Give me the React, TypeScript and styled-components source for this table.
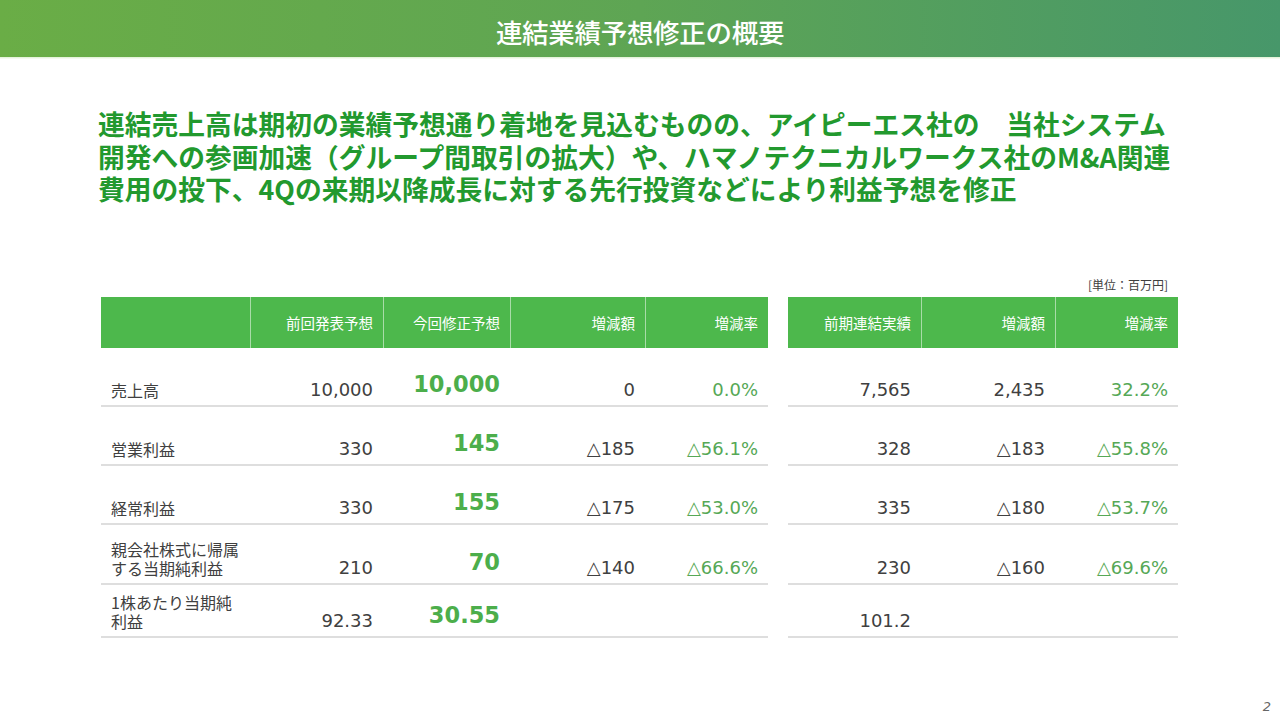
import React from "react";
import styled, { createGlobalStyle } from "styled-components";

const Global = createGlobalStyle`
  html, body { margin: 0; padding: 0; background: #ffffff; }
  body { width: 1280px; height: 720px; overflow: hidden; font-family: "Noto Sans CJK JP", "Noto Sans", sans-serif; }
`;

const Page = styled.div`
  width: 1280px;
  height: 720px;
  display: flex;
  flex-direction: column;
  position: relative;
  background: #fff;
`;

const TitleBar = styled.header`
  height: 57px;
  flex: 0 0 57px;
  display: flex;
  align-items: center;
  justify-content: center;
  background: linear-gradient(90deg, #6aad46 0%, #5ea554 50%, #47976a 100%);
  box-shadow: 0 1px 0 #e6f3dc, 0 2px 0 #f4faef;
`;

const Title = styled.h1`
  margin: 0;
  padding-top: 6px;
  font-family: "Noto Sans CJK JP", sans-serif;
  font-weight: 500;
  font-size: 26.5px;
  letter-spacing: -0.3px;
  color: #ffffff;
`;

const Headline = styled.p`
  margin: 0;
  padding: 51px 0 0 98px;
  font-family: "Noto Sans CJK JP", sans-serif;
  font-weight: 700;
  font-size: 26.75px;
  line-height: 32.5px;
  color: #22992e;
  white-space: pre;
`;

const TablesArea = styled.div`
  margin-top: 71px;
  padding-left: 101px;
  display: flex;
  gap: 20px;
  align-items: flex-end;
`;

const TableCol = styled.div`
  display: flex;
  flex-direction: column;
`;

const Unit = styled.div`
  align-self: flex-end;
  padding-right: 10px;
  height: 20px;
  font-family: "Noto Sans CJK JP", sans-serif;
  font-size: 12px;
  line-height: 16px;
  color: #404040;
`;

const Grid = styled.div<{ $cols: string }>`
  display: grid;
  grid-template-columns: ${(p) => p.$cols};
  grid-template-rows: 51px 59px 59px 59px 60px 53px;
`;

const HeadCell = styled.div<{ $first?: boolean }>`
  background: #4db84c;
  display: flex;
  align-items: center;
  justify-content: flex-end;
  padding-right: 10px;
  color: #ffffff;
  font-family: "Noto Sans CJK JP", sans-serif;
  font-size: 14.5px;
  border-left: ${(p) => (p.$first ? "none" : "1px solid #a9dca8")};
`;

const Cell = styled.div<{ $pad?: number }>`
  display: flex;
  align-items: flex-end;
  justify-content: flex-end;
  padding: 0 10px ${(p) => p.$pad ?? 5}px 10px;
  border-bottom: 2px solid #dedede;
`;

const Label = styled(Cell)`
  justify-content: flex-start;
  font-family: "Noto Sans CJK JP", sans-serif;
  font-size: 16px;
  line-height: 19px;
  color: #404040;
`;

const Num = styled.span<{ $tone?: "plain" | "big" | "rate" }>`
  font-family: "DejaVu Sans", Verdana, sans-serif;
  font-size: ${(p) => (p.$tone === "big" ? "22.5px" : "18px")};
  font-weight: ${(p) => (p.$tone === "big" ? 700 : 400)};
  line-height: ${(p) => (p.$tone === "big" ? "26px" : "21px")};
  color: ${(p) =>
    p.$tone === "big" ? "#4cae4b" : p.$tone === "rate" ? "#56a856" : "#404040"};
`;

const PageNo = styled.div`
  position: absolute;
  right: 9px;
  bottom: 6px;
  font-family: "DejaVu Sans", sans-serif;
  font-size: 13px;
  font-style: italic;
  color: #666;
`;

type Row = {
  label: string;
  prev: string;
  now: string;
  diff: string;
  rate: string;
  last: string;
  diff2: string;
  rate2: string;
};

const rows: Row[] = [
  { label: "売上高", prev: "10,000", now: "10,000", diff: "0", rate: "0.0%", last: "7,565", diff2: "2,435", rate2: "32.2%" },
  { label: "営業利益", prev: "330", now: "145", diff: "△185", rate: "△56.1%", last: "328", diff2: "△183", rate2: "△55.8%" },
  { label: "経常利益", prev: "330", now: "155", diff: "△175", rate: "△53.0%", last: "335", diff2: "△180", rate2: "△53.7%" },
  { label: "親会社株式に帰属\nする当期純利益", prev: "210", now: "70", diff: "△140", rate: "△66.6%", last: "230", diff2: "△160", rate2: "△69.6%" },
  { label: "1株あたり当期純\n利益", prev: "92.33", now: "30.55", diff: "", rate: "", last: "101.2", diff2: "", rate2: "" },
];

const LabelText = styled.span`
  white-space: pre;
`;

export default function App() {
  return (
    <Page>
      <Global />
      <TitleBar>
        <Title>連結業績予想修正の概要</Title>
      </TitleBar>
      <Headline>
        {"連結売上高は期初の業績予想通り着地を見込むものの、アイピーエス社の　当社システム\n開発への参画加速（グループ間取引の拡大）や、ハマノテクニカルワークス社のM&A関連\n費用の投下、4Qの来期以降成長に対する先行投資などにより利益予想を修正"}
      </Headline>
      <TablesArea>
        <TableCol>
          <Grid $cols="149px 133px 127px 135px 123px">
            <HeadCell $first />
            <HeadCell>前回発表予想</HeadCell>
            <HeadCell>今回修正予想</HeadCell>
            <HeadCell>増減額</HeadCell>
            <HeadCell>増減率</HeadCell>
            {rows.map((r) => (
              <React.Fragment key={r.label}>
                <Label>
                  <LabelText>{r.label}</LabelText>
                </Label>
                <Cell>
                  <Num>{r.prev}</Num>
                </Cell>
                <Cell $pad={8}>
                  <Num $tone="big">{r.now}</Num>
                </Cell>
                <Cell>
                  <Num>{r.diff}</Num>
                </Cell>
                <Cell>
                  <Num $tone="rate">{r.rate}</Num>
                </Cell>
              </React.Fragment>
            ))}
          </Grid>
        </TableCol>
        <TableCol>
          <Unit>[単位：百万円]</Unit>
          <Grid $cols="133px 134px 123px">
            <HeadCell $first>前期連結実績</HeadCell>
            <HeadCell>増減額</HeadCell>
            <HeadCell>増減率</HeadCell>
            {rows.map((r) => (
              <React.Fragment key={r.label}>
                <Cell>
                  <Num>{r.last}</Num>
                </Cell>
                <Cell>
                  <Num>{r.diff2}</Num>
                </Cell>
                <Cell>
                  <Num $tone="rate">{r.rate2}</Num>
                </Cell>
              </React.Fragment>
            ))}
          </Grid>
        </TableCol>
      </TablesArea>
      <PageNo>2</PageNo>
    </Page>
  );
}
